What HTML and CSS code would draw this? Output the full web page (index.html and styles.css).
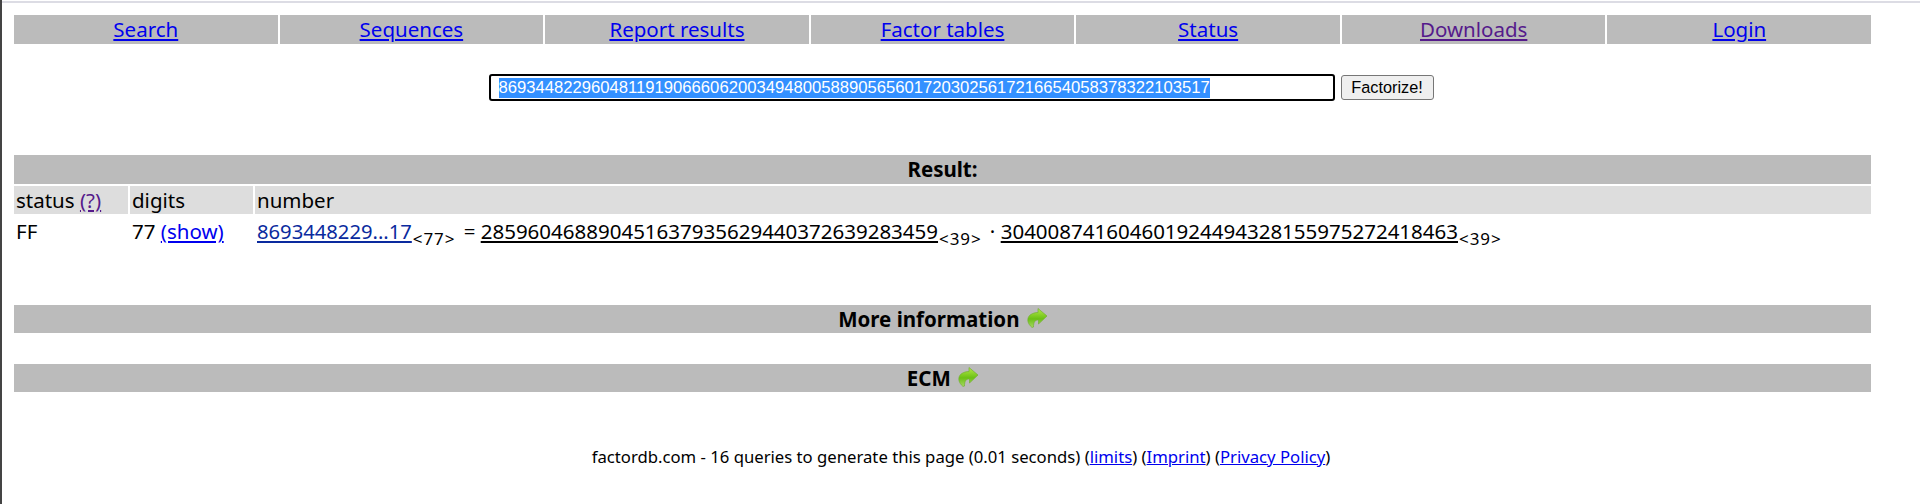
FILE: index.html
```html
<!DOCTYPE html>
<html lang="en">
<head>
<meta charset="UTF-8" />
<title>factordb.com</title>
<link rel="stylesheet" href="styles.css">
</head>
<body>
  <div class="topline"></div>
  <div class="container">
    <nav class="nav">
      <a href="#search">Search</a>
      <a href="#sequences">Sequences</a>
      <a href="#report">Report results</a>
      <a href="#tables">Factor tables</a>
      <a href="#status">Status</a>
      <a href="#downloads" class="visited">Downloads</a>
      <a href="#login">Login</a>
    </nav>

    <form class="search" onsubmit="event.preventDefault()">
      <input type="text" id="query" class="query" value="86934482296048119190666062003494800588905656017203025617216654058378322103517" />
      <button type="submit" class="go">Factorize!</button>
    </form>

    <div class="bar">Result:</div>
    <div class="cols">
      <div class="col-status">status <a href="#help" class="visited">(?)</a></div>
      <div class="col-digits">digits</div>
      <div class="col-number">number</div>
    </div>
    <div class="cols row">
      <div class="col-status">FF</div>
      <div class="col-digits">77 <a href="#show">(show)</a></div>
      <div class="col-number">
        <a href="#n" class="num">8693448229...17</a><sub>&lt;77&gt;</sub> = <a href="#p" class="factor">285960468890451637935629440372639283459</a><sub>&lt;39&gt;</sub> · <a href="#q" class="factor">304008741604601924494328155975272418463</a><sub>&lt;39&gt;</sub>
      </div>
    </div>

    <div class="bar more">More information
      <svg class="arrow" viewBox="0 0 20 20" width="20" height="20">
        <defs>
          <linearGradient id="grn" x1="0" y1="0" x2="0" y2="1">
            <stop offset="0" stop-color="#b4ea48" />
            <stop offset=".55" stop-color="#6cc015" />
            <stop offset="1" stop-color="#a4d860" />
          </linearGradient>
        </defs>
        <path d="M11 .5 L20 8 L11.5 16 V12 C8 11.8 6.5 14 6.5 19 C6 19.5 5 19.5 4.5 19 C1 16 0 12 1.5 9 C3 6 7 4.5 11 4.5 Z" fill="url(#grn)" stroke="#74b032" stroke-width=".7" />
      </svg>
    </div>
    <div class="bar ecm">ECM
      <svg class="arrow" viewBox="0 0 20 20" width="20" height="20">
        <path d="M11 .5 L20 8 L11.5 16 V12 C8 11.8 6.5 14 6.5 19 C6 19.5 5 19.5 4.5 19 C1 16 0 12 1.5 9 C3 6 7 4.5 11 4.5 Z" fill="url(#grn)" stroke="#74b032" stroke-width=".7" />
      </svg>
    </div>

    <p class="footer">factordb.com - 16 queries to generate this page (0.01 seconds) (<a href="#limits">limits</a>) (<a href="#imprint">Imprint</a>) (<a href="#privacy">Privacy Policy</a>)</p>
  </div>

  <script>
    var q = document.getElementById('query');
    q.focus();
    q.select();
  </script>
</body>
</html>
```

FILE: styles.css
```css
html {
  background: white;
}
body {
  margin: 0;
  height: 504px;
  overflow: hidden;
  border-left: 2px solid #444;
  font-family: 'Noto Sans', sans-serif;
  font-size: 20.5px;
  color: black;
}
a {
  color: #0000ee;
}
a.visited {
  color: #551a8b;
}
.topline {
  height: 2px;
  margin-top: 1px;
  background: #dcdce4;
}
.container {
  width: 1857px;
  margin-left: 12px;
}
.nav {
  display: flex;
  gap: 2px;
  margin-top: 12px;
}
.nav a {
  flex: 1;
  height: 29px;
  line-height: 29px;
  text-align: center;
  background: #bbb;
}
.search {
  display: flex;
  justify-content: center;
  align-items: center;
  gap: 6px;
  margin-top: 30px;
  height: 27px;
  padding-left: 37px;
}
.query {
  box-sizing: border-box;
  width: 846px;
  height: 27px;
  padding: 0 8px;
  border: 2px solid black;
  border-radius: 3px;
  outline: none;
  font-family: 'Liberation Sans', sans-serif;
  font-size: 16.65px;
}
.query::selection {
  background: #3390ff;
  color: white;
}
.go {
  box-sizing: border-box;
  width: 93px;
  height: 25px;
  padding: 0;
  background: #efefef;
  border: 1px solid #767676;
  border-radius: 3px;
  font-family: 'Liberation Sans', sans-serif;
  font-size: 16.3px;
}
.bar {
  height: 29px;
  line-height: 29px;
  margin-top: 54px;
  text-align: center;
  font-weight: 700;
  background: #bbb;
}
.bar.more {
  margin-top: 0;
  height: 28px;
  line-height: 28px;
}
.cols {
  display: flex;
  gap: 2px;
  margin-top: 2px;
  height: 28px;
  line-height: 28px;
}
.cols > div {
  background: #ddd;
  padding-left: 2px;
  box-sizing: border-box;
}
.col-status {
  width: 114px;
}
.col-digits {
  width: 123px;
}
.col-number {
  flex: 1;
}
.row {
  height: 40px;
  line-height: 31px;
  margin-bottom: 49px;
}
.row > div {
  background: none;
}
.num {
  color: #0a2a9e;
  font-size: 20.2px;
}
.factor {
  color: black;
}
sub {
  font-size: 17px;
  line-height: 0;
  letter-spacing: 0.9px;
  vertical-align: -6px;
  margin-right: 3px;
  margin-left: 1px;
}
.bar.ecm {
  margin-top: 31px;
  height: 28px;
  line-height: 28px;
}
.arrow {
  vertical-align: -3px;
  margin-left: 2px;
  transform: translateY(-2px);
}
.footer {
  margin: 53px 0 0;
  padding-left: 37px;
  text-align: center;
  font-size: 16.7px;
}
```
